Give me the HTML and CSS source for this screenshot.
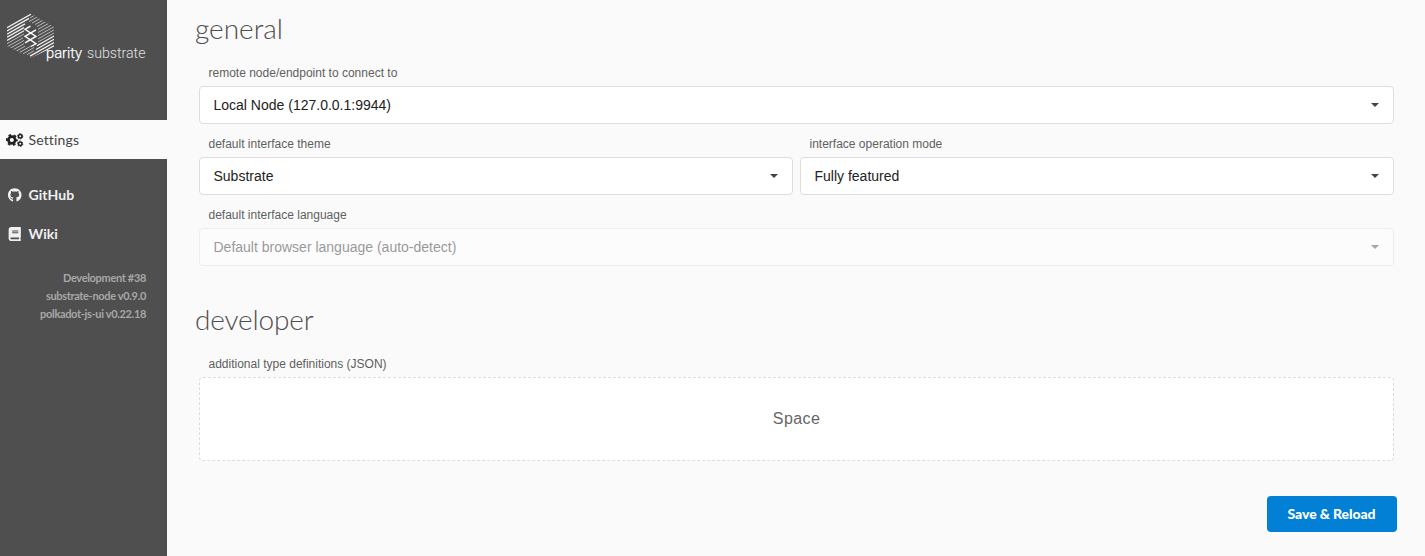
FILE: index.html
```html
<!DOCTYPE html>
<html lang="en">
<head>
<meta charset="utf-8">
<title>Settings</title>
<link rel="stylesheet" href="styles.css">
</head>
<body>
<div class="app">
  <aside class="sidebar">
    <svg class="logo" viewBox="0 0 160 64" width="160" height="64">
      <defs><clipPath id="hex"><path d="M30.5 13.5 54 27v20L30.5 58 7 46V26z"/></clipPath></defs>
      <g clip-path="url(#hex)" stroke="#fff" fill="none">
        <path stroke-width="1.25" opacity=".92" d="M7 27.7l24-13.6M7 30.9l22-12.5M7 34.1l18-10.2M7 37.3l17-9.7M7 40.5l17-9.7M31 58.7l23-13M30 56.1l24-13.6M36 49.5l18-10.2M37 45.7l17-9.6"/>
        <path stroke-width="1" opacity=".6" d="M30 17.9l6-3.4M29 21.6l12-6.8M32 23.1l14-8M35 24.6l16-9M37 26.6l17-9.6M38 29.3l16-9M38 32.5l16-9M38 35.7l16-9M38 38.9l16-9M38 42l16-9M7 43.7l17-9.7M7 46.9l16-9M7 50.1l17-9.7M11 51l13-7.4M15 51.9l10-5.7M19 52.8l12-6.8M23 53.8l11-6.3M27 54.7l7-4"/>
      </g>
      <path d="M30.5 26.2L25 29.4L36 36.4L25 42.8M36 29.8L25 36.3L36 43.7L31 46.5" fill="none" stroke="#fff" stroke-width="1.4"/>
      <text class="logo-strong" x="46" y="58" textLength="36" lengthAdjust="spacingAndGlyphs">parity</text>
      <text class="logo-light" x="87" y="58" textLength="58.5" lengthAdjust="spacingAndGlyphs">substrate</text>
    </svg>
    <nav class="menu">
      <a class="item active">
        <svg class="icon cogs" viewBox="0 0 18 14" fill="none" stroke="currentColor">
          <circle cx="6" cy="7" r="3.5" stroke-width="2.8"/>
          <circle cx="6" cy="7" r="5.2" stroke-width="2" stroke-dasharray="2.72 2.72" stroke-dashoffset="1.36"/>
          <circle cx="14.6" cy="3.2" r="1.8" stroke-width="1.6"/>
          <circle cx="14.6" cy="3.2" r="2.7" stroke-width="1" stroke-dasharray="1.41 1.41"/>
          <circle cx="14.6" cy="10.9" r="1.8" stroke-width="1.6"/>
          <circle cx="14.6" cy="10.9" r="2.7" stroke-width="1" stroke-dasharray="1.41 1.41"/>
        </svg><span>Settings</span>
      </a>
      <a class="item github">
        <svg class="icon" viewBox="0 0 496 512" fill="currentColor"><path d="M244.8 8C106.1 8 0 113.3 0 252c0 110.9 69.8 205.8 169.5 239.2 12.8 2.3 17.3-5.6 17.3-12.1 0-6.2-.3-40.4-.3-61.4 0 0-70 15-84.7-29.8 0 0-11.4-29.1-27.8-36.6 0 0-22.9-15.7 1.6-15.4 0 0 24.9 2 38.6 25.8 21.9 38.6 58.6 27.5 72.9 20.9 2.3-16 8.8-27.1 16-33.7-55.9-6.2-112.3-14.3-112.3-110.5 0-27.5 7.6-41.3 23.6-58.9-2.6-6.5-11.1-33.3 2.6-67.9 20.9-6.5 69 27 69 27 20-5.6 41.5-8.5 62.8-8.5s42.8 2.9 62.8 8.5c0 0 48.1-33.6 69-27 13.7 34.7 5.2 61.4 2.6 67.9 16 17.7 25.8 31.5 25.8 58.9 0 96.5-58.9 104.2-114.8 110.5 9.2 7.9 17 22.9 17 46.4 0 33.7-.3 75.4-.3 83.6 0 6.5 4.6 14.4 17.3 12.1C428.2 457.8 496 362.9 496 252 496 113.3 383.5 8 244.8 8z"/></svg><span>GitHub</span>
      </a>
      <a class="item wiki">
        <svg class="icon" viewBox="0 0 448 512" fill="currentColor"><path d="M448 360V24c0-13.3-10.7-24-24-24H96C43 0 0 43 0 96v320c0 53 43 96 96 96h328c13.3 0 24-10.7 24-24v-16c0-7.5-3.5-14.3-8.9-18.7-4.2-15.4-4.2-59.3 0-74.7 5.4-4.3 8.9-11.1 8.9-18.6zM128 134c0-3.3 2.7-6 6-6h212c3.3 0 6 2.7 6 6v20c0 3.3-2.7 6-6 6H134c-3.3 0-6-2.7-6-6v-20zm0 64c0-3.3 2.7-6 6-6h212c3.3 0 6 2.7 6 6v20c0 3.3-2.7 6-6 6H134c-3.3 0-6-2.7-6-6v-20zm253.4 250H96c-17.7 0-32-14.3-32-32 0-17.6 14.4-32 32-32h285.4c-1.9 17.1-1.9 46.9 0 64z"/></svg><span>Wiki</span>
      </a>
    </nav>
    <div class="versions">
      <div>Development #38</div>
      <div>substrate-node v0.9.0</div>
      <div>polkadot-js-ui v0.22.18</div>
    </div>
  </aside>
  <main class="content">
    <h1>general</h1>
    <div class="row">
      <div class="field"><label>remote node/endpoint to connect to</label><div class="select"><span>Local Node (127.0.0.1:9944)</span><i class="caret"></i></div></div>
    </div>
    <div class="row">
      <div class="field"><label>default interface theme</label><div class="select"><span>Substrate</span><i class="caret"></i></div></div>
      <div class="field"><label>interface operation mode</label><div class="select"><span>Fully featured</span><i class="caret"></i></div></div>
    </div>
    <div class="row">
      <div class="field"><label>default interface language</label><div class="select disabled"><span>Default browser language (auto-detect)</span><i class="caret"></i></div></div>
    </div>
    <h1 class="second">developer</h1>
    <div class="row">
      <div class="field"><label>additional type definitions (JSON)</label><div class="drop">Space</div></div>
    </div>
    <div class="actions"><button class="save">Save &amp; Reload</button></div>
  </main>
</div>
</body>
</html>
```
FILE: styles.css
```css
* { box-sizing: border-box; }
body { margin: 0; background: #fafafa; font-family: "Liberation Sans", Arial, sans-serif; color: #4e4e4e; }
.app { display: flex; height: 556px; overflow: hidden; }
.sidebar { width: 167px; flex: none; background: #4f4f4f; font-family: Lato, sans-serif; }
.logo { display: block; width: 160px; height: 64px; fill: #fff; }
.logo-strong { font: 300 14px Roboto, sans-serif; fill: #fff; stroke: #fff; stroke-width: .25px; }
.logo-light { font: 300 14px Roboto, sans-serif; fill: #e0e0e0; }
.menu { padding-top: 56px; }
.item { display: flex; align-items: center; height: 39px; padding-left: 6px; gap: 5px; font-size: 14px; font-weight: 700; color: #f0f0f0; letter-spacing: .05px; }
.item.active { background: #fafafa; color: #222; font-weight: 400; margin-bottom: 16px; letter-spacing: .15px; }
.active span { color: #444; }
.icon { width: 17.5px; height: 14px; flex: none; }
.versions { padding: 16px 21px 0 0; text-align: right; font-size: 11px; line-height: 18px; font-weight: 700; letter-spacing: -.33px; color: #a7a7a7; }
.content { flex: 1; padding: 8px 28px 0 28px; }
h1 { margin: 0; font: 300 28px/40px Lato, sans-serif; height: 40px; color: #4e4e4e; }
h1.second { margin-top: 20px; letter-spacing: -.15px; }
.row { display: flex; gap: 7px; padding: 0 3px 0 4px; }
.field { flex: 1; }
.field label { display: block; height: 20px; padding-left: 9.5px; font-size: 12px; line-height: 14px; color: #5f5f5f; }
h1 + .row { margin-top: 18px; }
.select { display: flex; align-items: center; justify-content: space-between; height: 38px; padding: 0 14px 0 13.5px; background: #fff; border: 1px solid #dededf; border-radius: 4px; font-size: 14px; color: #222; margin-bottom: 13px; }
.caret { border: 4px solid transparent; border-top-color: #444; border-bottom: 0; }
.disabled { opacity: .45; }
.drop { height: 84px; display: flex; align-items: center; justify-content: center; background: #fff; border: 1px dashed #dcdcdc; border-radius: 4px; font-size: 16px; letter-spacing: .4px; color: #666; }
.actions { display: flex; justify-content: flex-end; margin-top: 35px; }
.save { width: 130px; height: 36px; border: 0; padding: 0 1px 1px 0; border-radius: 4px; background: #0280d6; color: #fff; font: 900 14px Lato, sans-serif; letter-spacing: -.1px; }
```
